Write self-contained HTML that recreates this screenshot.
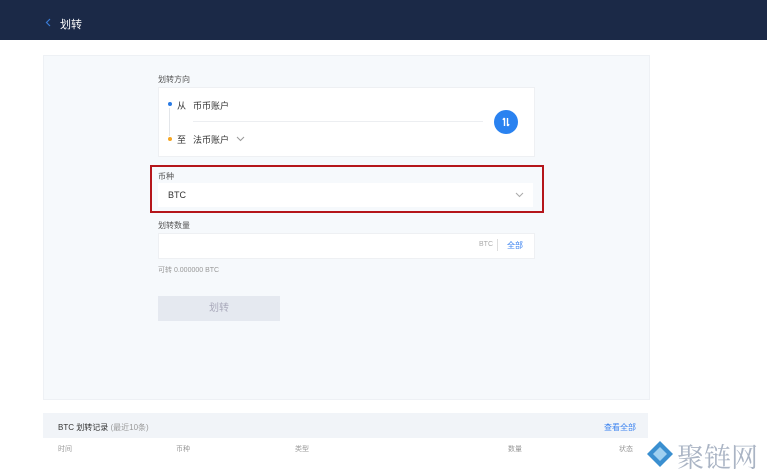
<!DOCTYPE html><html><head><meta charset="utf-8"><style>
body{margin:0;width:767px;height:467px;overflow:hidden;background:#fff;font-family:"Liberation Sans","Noto Sans CJK SC",sans-serif;position:relative}
.a{position:absolute}
</style></head><body>
<div class="a" style="left:0;top:0;width:767px;height:40px;background:#1b2947"></div>
<svg class="a" style="left:45px;top:18px" width="6" height="9"><path d="M5 1L1.5 4.5L5 8" stroke="#3a7bd5" stroke-width="1.2" fill="none"/></svg>
<div class="a" style="left:60px;top:16px;color:#fff;font-size:11px">划转</div>
<div class="a" style="left:43px;top:55px;width:605px;height:343px;background:#f6f9fc;border:1px solid #eef1f5"></div>
<div class="a" style="left:158px;top:74px;font-size:8px;color:#555">划转方向</div>
<div class="a" style="left:158px;top:87px;width:375px;height:68px;background:#fff;border:1px solid #eef0f3"></div>
<div class="a" style="left:168px;top:102px;width:4px;height:4px;border-radius:2px;background:#2a7be4"></div>
<div class="a" style="left:169px;top:108px;width:1px;height:28px;background:#e3e6ea"></div>
<div class="a" style="left:168px;top:137px;width:4px;height:4px;border-radius:2px;background:#f5a623"></div>
<div class="a" style="left:177px;top:99px;font-size:9px;color:#333">从</div>
<div class="a" style="left:193px;top:99px;font-size:9px;color:#333">币币账户</div>
<div class="a" style="left:193px;top:121px;width:290px;height:1px;background:#eceef1"></div>
<div class="a" style="left:177px;top:133px;font-size:9px;color:#333">至</div>
<div class="a" style="left:193px;top:133px;font-size:9px;color:#333">法币账户</div>
<svg class="a" style="left:236px;top:136px" width="9" height="6"><path d="M1 1L4.5 4.5L8 1" stroke="#999" stroke-width="1" fill="none"/></svg>
<div class="a" style="left:494px;top:110px;width:24px;height:24px;border-radius:12px;background:#2a82f0"></div>
<svg class="a" style="left:494px;top:110px" width="24" height="24"><path d="M10.5 16V8M8.8 9.7L10.5 8M13.5 8V16M15.2 14.3L13.5 16" stroke="#fff" stroke-width="1.4" fill="none"/></svg>
<div class="a" style="left:150px;top:165px;width:390px;height:44px;border:2px solid #b5161b"></div>
<div class="a" style="left:158px;top:171px;font-size:8px;color:#555">币种</div>
<div class="a" style="left:158px;top:183px;width:375px;height:24px;background:#fff"></div>
<div class="a" style="left:168px;top:190px;font-size:9px;color:#333">BTC</div>
<svg class="a" style="left:515px;top:192px" width="9" height="6"><path d="M1 1L4.5 4.5L8 1" stroke="#aaa" stroke-width="1" fill="none"/></svg>
<div class="a" style="left:158px;top:220px;font-size:8px;color:#555">划转数量</div>
<div class="a" style="left:158px;top:233px;width:375px;height:24px;background:#fff;border:1px solid #eef0f3"></div>
<div class="a" style="left:479px;top:241px;font-size:7px;color:#aaa">BTC</div>
<div class="a" style="left:497px;top:239px;width:1px;height:12px;background:#ddd"></div>
<div class="a" style="left:507px;top:240px;font-size:8px;color:#3a82f0">全部</div>
<div class="a" style="left:158px;top:265px;font-size:7px;color:#999">可转 0.000000 BTC</div>
<div class="a" style="left:158px;top:296px;width:122px;height:25px;background:#e5e9f0;color:#aab;font-size:10px;text-align:center;line-height:25px">划转</div>
<div class="a" style="left:43px;top:413px;width:605px;height:25px;background:#f1f4f8"></div>
<div class="a" style="left:58px;top:422px;font-size:8px;color:#333">BTC 划转记录 <span style="color:#999">(最近10条)</span></div>
<div class="a" style="left:604px;top:422px;font-size:8px;color:#3a82f0">查看全部</div>
<div class="a" style="left:58px;top:444px;font-size:7px;color:#999">时间</div>
<div class="a" style="left:176px;top:444px;font-size:7px;color:#999">币种</div>
<div class="a" style="left:295px;top:444px;font-size:7px;color:#999">类型</div>
<div class="a" style="left:508px;top:444px;font-size:7px;color:#999">数量</div>
<div class="a" style="left:619px;top:444px;font-size:7px;color:#999">状态</div>
<svg class="a" style="left:646px;top:440px" width="28" height="27"><path d="M14 1L27 14L14 27L1 14Z" fill="#3a8fd0"/><path d="M14 7L21 14L14 21L7 14Z" fill="#9fd0f0"/></svg>
<div class="a" style="left:677px;top:436px;font-size:27px;color:#aab4c4;font-family:'Noto Serif CJK SC',serif;white-space:nowrap">聚链网</div>
</body></html>
